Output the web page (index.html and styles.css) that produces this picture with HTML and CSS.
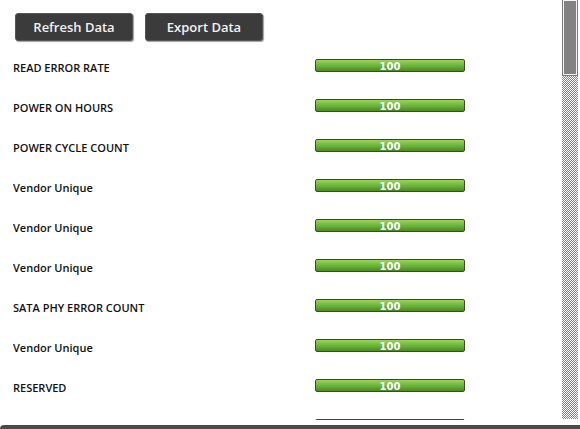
FILE: index.html
```html
<!DOCTYPE html>
<html lang="en">
<head>
    <meta charset="UTF-8">
    <title>SMART Attributes</title>
    <link rel="stylesheet" href="styles.css">
</head>
<body>

<div class="window">
    <div class="content">
        <div class="toolbar">
            <button class="btn">Refresh Data</button>
            <button class="btn">Export Data</button>
        </div>

        <div class="attr-list">
            <div class="attr-row">
                <span class="attr-name">READ ERROR RATE</span>
                <div class="meter">100</div>
            </div>
            <div class="attr-row">
                <span class="attr-name">POWER ON HOURS</span>
                <div class="meter">100</div>
            </div>
            <div class="attr-row">
                <span class="attr-name">POWER CYCLE COUNT</span>
                <div class="meter">100</div>
            </div>
            <div class="attr-row">
                <span class="attr-name">Vendor Unique</span>
                <div class="meter">100</div>
            </div>
            <div class="attr-row">
                <span class="attr-name">Vendor Unique</span>
                <div class="meter">100</div>
            </div>
            <div class="attr-row">
                <span class="attr-name">Vendor Unique</span>
                <div class="meter">100</div>
            </div>
            <div class="attr-row">
                <span class="attr-name">SATA PHY ERROR COUNT</span>
                <div class="meter">100</div>
            </div>
            <div class="attr-row">
                <span class="attr-name">Vendor Unique</span>
                <div class="meter">100</div>
            </div>
            <div class="attr-row">
                <span class="attr-name">RESERVED</span>
                <div class="meter">100</div>
            </div>
            <!-- next row, scrolled below the fold -->
            <div class="attr-row">
                <span class="attr-name"></span>
                <div class="meter"></div>
            </div>
        </div>
    </div>

    <!-- classic scrollbar -->
    <div class="scrollbar">
        <div class="scroll-thumb"></div>
    </div>
</div>

<div class="frame-bottom"></div>

</body>
</html>
```

FILE: styles.css
```css
body {
    margin: 0;
    padding: 0;
    background-color: #fff;
    font-family: "Open Sans", "Liberation Sans", sans-serif;
    width: 580px;
    height: 429px;
    overflow: hidden;
}
.window {
    display: flex;
    height: 420px;
    overflow: hidden;
}
.content {
    flex: 1;
    padding: 13px 0 0 13px;
}
.toolbar {
    display: flex;
    gap: 12px;
    padding-left: 2px;
}
.btn {
    width: 118px;
    height: 28px;
    background-color: #3b3b3b;
    color: #f2f2f2;
    border: 1px solid #555;
    border-radius: 3px;
    box-shadow: 1px 1px 1px #a0a0a0;
    font-family: "Open Sans", sans-serif;
    font-weight: 600;
    font-size: 13px;
    padding: 0;
    cursor: pointer;
}
.attr-list {
    margin-top: 7px;
}
.attr-row {
    display: flex;
    align-items: center;
    height: 40px;
}
.attr-name {
    width: 302px;
    margin-bottom: 2px;
    font-size: 11px;
    font-weight: 600;
    color: #111;
}
.meter {
    width: 148px;
    height: 11px;
    margin-top: -5px;
    border: 1px solid #3a4a2c;
    border-radius: 2px;
    background: linear-gradient(#9ad45c, #69b238 55%, #4a8a22);
    color: #fff;
    font-family: "DejaVu Sans", Verdana, sans-serif;
    font-weight: bold;
    font-size: 10px;
    line-height: 13px;
    text-align: center;
}
.scrollbar {
    width: 16px;
    margin-right: 2px;
    height: 419px;
    background: repeating-conic-gradient(#808080 0 25%, #fff 0 50%) 0 0 / 2px 2px;
}
.scroll-thumb {
    height: 75px;
    margin: 0 1px;
    box-sizing: border-box;
    background-color: #828282;
    border: 1px solid #f4f4f4;
    box-shadow: 0 0 0 1px #7a7a7a;
}
.frame-bottom {
    margin-top: 5px;
    height: 4px;
    background-color: #4a4a4a;
    border-top-left-radius: 4px;
}
```
